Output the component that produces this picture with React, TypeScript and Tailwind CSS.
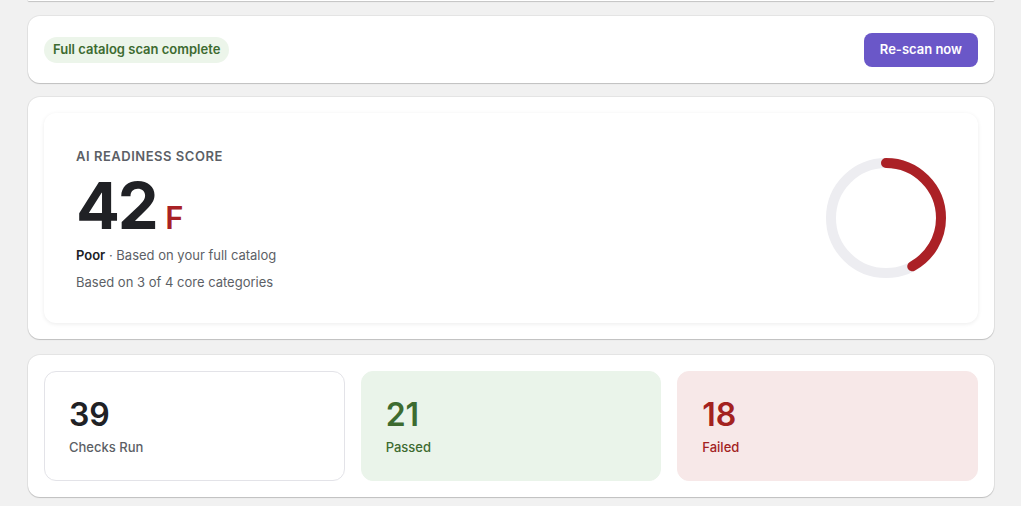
import React from "react";

const cardCls =
  "bg-white rounded-[12px] shadow-[0_1px_1px_rgba(0,0,0,0.16),0_0_0_1px_rgba(0,0,0,0.05)]";

function ScoreRing({ value }: { value: number }) {
  const r = 55;
  const c = 2 * Math.PI * r;
  const dash = (value / 100) * c;
  return (
    <svg width="120" height="120" viewBox="0 0 120 120">
      <circle cx="60" cy="60" r={r} fill="none" stroke="#ededf1" strokeWidth="10" />
      <circle
        cx="60"
        cy="60"
        r={r}
        fill="none"
        stroke="#ab2126"
        strokeWidth="10"
        strokeLinecap="round"
        strokeDasharray={`${dash} ${c}`}
        transform="rotate(-90 60 60)"
      />
    </svg>
  );
}

function Stat({ value, label, tone }: { value: number; label: string; tone: "plain" | "good" | "bad" }) {
  const box =
    tone === "plain"
      ? "bg-white border border-[#e3e3e8]"
      : tone === "good"
      ? "bg-[#eaf4ea] border border-[#eaf4ea]"
      : "bg-[#f7e8e8] border border-[#f7e8e8]";
  const num = tone === "plain" ? "text-[#202125]" : tone === "good" ? "text-[#3d6b30]" : "text-[#a3221f]";
  const lab = tone === "plain" ? "text-[#5c5f66]" : tone === "good" ? "text-[#3d6b30]" : "text-[#a3221f]";
  return (
    <div className={`${box} rounded-[12px] h-[110px] px-6 pt-[23px]`}>
      <div className={`text-[32px] leading-[40px] font-semibold ${num}`}>{value}</div>
      <div className={`text-[13px] leading-[20px] font-medium mt-[2px] ${lab}`}>{label}</div>
    </div>
  );
}

export default function App() {
  return (
    <div
      className="min-h-screen bg-[#f1f1f1] pl-[28px] pr-[27px] flex flex-col gap-[14px]"
      style={{ fontFamily: "Inter, 'Noto Sans', sans-serif" }}
    >
      <div className={`${cardCls} h-[1px] rounded-t-none`} />

      <div className={`${cardCls} p-4 flex items-center justify-between h-[67px] mt-[1px]`}>
        <span className="bg-[#ecf5ea] text-[#3d6b30] text-[13px] font-semibold rounded-full px-[9px] h-[26px] flex items-center">
          Full catalog scan complete
        </span>
        <button className="bg-[#6a57c8] text-white text-[13px] font-semibold rounded-[8px] px-4 h-[34px]">
          Re-scan now
        </button>
      </div>

      <div className={`${cardCls} p-4`}>
        <div className="rounded-[12px] bg-white shadow-[0_1px_4px_rgba(0,0,0,0.08)] h-[210px] pl-8 pr-8 flex items-center justify-between">
          <div className="pt-[3px]">
            <div className="text-[13px] leading-[16px] font-semibold tracking-[0.04em] text-[#5c5f66]">
              AI READINESS SCORE
            </div>
            <div className="flex items-baseline mt-[10px] h-[64px]">
              <span className="text-[65px] leading-[64px] font-bold tracking-[-0.035em] text-[#202125]">42</span>
              <span className="text-[31px] leading-[64px] font-semibold text-[#a82125] ml-[9px]">F</span>
            </div>
            <div className="text-[13px] leading-[20px] text-[#5c5f66] mt-[7px]">
              <span className="font-semibold text-[#202125]">Poor</span> · Based on your full catalog
            </div>
            <div className="text-[13px] leading-[20px] text-[#5c5f66] mt-[7px]">Based on 3 of 4 core categories</div>
          </div>
          <div>
            <ScoreRing value={42} />
          </div>
        </div>
      </div>

      <div className={`${cardCls} p-4 mt-[2px] grid grid-cols-3 gap-4`}>
        <Stat value={39} label="Checks Run" tone="plain" />
        <Stat value={21} label="Passed" tone="good" />
        <Stat value={18} label="Failed" tone="bad" />
      </div>
    </div>
  );
}
